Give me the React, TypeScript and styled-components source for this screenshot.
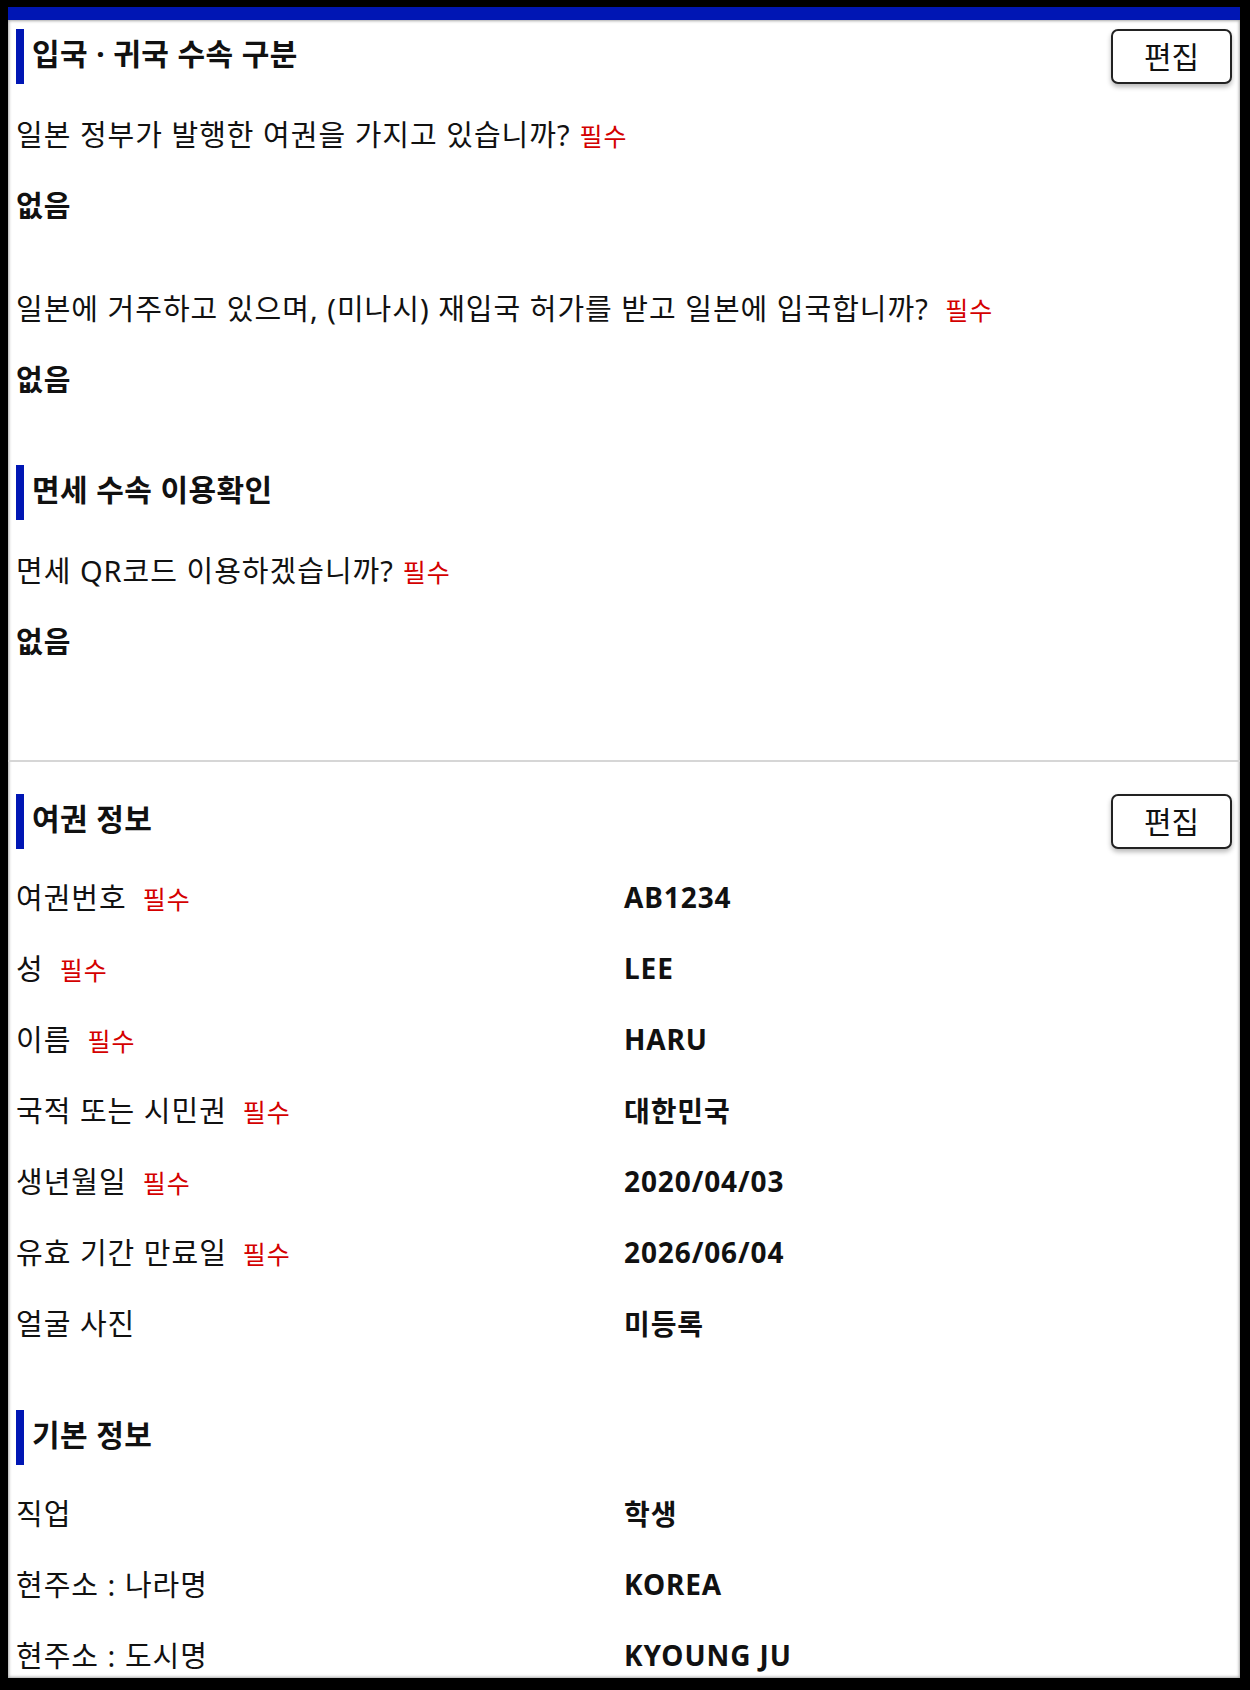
import React from "react";
import styled, { createGlobalStyle } from "styled-components";

const BLUE = "#0016b4";
const RED = "#d40000";

const GlobalStyle = createGlobalStyle`
  html, body {
    margin: 0;
    padding: 0;
    background: #000;
  }
  body {
    font-family: "Noto Sans", "Noto Sans CJK KR", sans-serif;
    color: #111;
  }
  * { box-sizing: border-box; }
`;

const Frame = styled.div`
  margin: 7px 10px 12px 8px;
  height: 1671px;
  overflow: hidden;
  background: #fff;
  border-top: 13px solid ${BLUE};
  box-shadow: inset 0 0 3px 1px rgba(0, 0, 0, 0.35);
`;

const Block = styled.div<{ $divided?: boolean; $pad: string; $gap: number }>`
  display: flex;
  flex-direction: column;
  gap: ${(p) => p.$gap}px;
  padding: ${(p) => p.$pad};
  border-bottom: ${(p) => (p.$divided ? "2px solid #d6d6d6" : "none")};
`;

const Section = styled.section`
  display: flex;
  flex-direction: column;
`;

const SectionHeader = styled.div<{ $space: number }>`
  display: flex;
  align-items: center;
  justify-content: space-between;
  height: 55px;
  margin-bottom: ${(p) => p.$space}px;
`;

const Title = styled.h2`
  margin: 0;
  height: 55px;
  display: flex;
  align-items: center;
  border-left: 8px solid ${BLUE};
  padding: 0 0 10px 8px;
  font-size: 30px;
  font-weight: 700;
  color: #111;
  letter-spacing: 0.4px;
`;

const EditButton = styled.button`
  width: 121px;
  height: 55px;
  border: 2px solid #222;
  border-radius: 7px;
  background: #fff;
  box-shadow: 0 3px 5px rgba(0, 0, 0, 0.28);
  font-family: inherit;
  font-size: 30px;
  color: #111;
  padding: 0 0 3px;
  cursor: pointer;
`;

const QAList = styled.div`
  display: flex;
  flex-direction: column;
  gap: 34px;
`;

const QA = styled.div`
  display: flex;
  flex-direction: column;
`;

const Question = styled.div`
  height: 70px;
  display: flex;
  align-items: center;
  padding-bottom: 2px;
  font-size: 29px;
  letter-spacing: 1px;
  white-space: pre;
`;

const Answer = styled.div`
  height: 70px;
  display: flex;
  align-items: center;
  font-size: 29px;
  font-weight: 700;
  letter-spacing: 1px;
`;

const Line = styled.span`
  display: inline-flex;
  align-items: baseline;
`;

const Required = styled.span<{ $gap: number }>`
  color: ${RED};
  font-size: 25px;
  letter-spacing: 1px;
  margin-left: ${(p) => p.$gap}px;
`;

const FieldGrid = styled.div`
  display: grid;
  grid-template-columns: 1fr 1fr;
  grid-auto-rows: 71px;
  align-items: center;
`;

const Label = styled.div`
  font-size: 29px;
  letter-spacing: 1px;
  display: flex;
  align-items: baseline;
  padding-bottom: 5px;
`;

const Value = styled.div`
  font-size: 28px;
  font-weight: 700;
  letter-spacing: 0.9px;
  padding-bottom: 4px;
`;

type Field = { label: string; value: string; required?: boolean };

const passport: Field[] = [
  { label: "여권번호", value: "AB1234", required: true },
  { label: "성", value: "LEE", required: true },
  { label: "이름", value: "HARU", required: true },
  { label: "국적 또는 시민권", value: "대한민국", required: true },
  { label: "생년월일", value: "2020/04/03", required: true },
  { label: "유효 기간 만료일", value: "2026/06/04", required: true },
  { label: "얼굴 사진", value: "미등록" },
];

const basic: Field[] = [
  { label: "직업", value: "학생" },
  { label: "현주소 : 나라명", value: "KOREA" },
  { label: "현주소 : 도시명", value: "KYOUNG JU" },
];

const Fields = ({ items }: { items: Field[] }) => (
  <FieldGrid>
    {items.map((f) => (
      <React.Fragment key={f.label}>
        <Label>
          {f.label}
          {f.required && <Required $gap={16}>필수</Required>}
        </Label>
        <Value>{f.value}</Value>
      </React.Fragment>
    ))}
  </FieldGrid>
);

const QAItem = ({ q, a, gap = 9 }: { q: string; a: string; gap?: number }) => (
  <QA>
    <Question>
      <Line>
        {q}
        <Required $gap={gap}>필수</Required>
      </Line>
    </Question>
    <Answer>{a}</Answer>
  </QA>
);

export default function App() {
  return (
    <>
      <GlobalStyle />
      <Frame>
        <Block $divided $pad="9px 8px 85px" $gap={52}>
          <Section>
            <SectionHeader $space={15}>
              <Title>입국 · 귀국 수속 구분</Title>
              <EditButton>편집</EditButton>
            </SectionHeader>
            <QAList>
              <QAItem q="일본 정부가 발행한 여권을 가지고 있습니까?" a="없음" />
              <QAItem
                q="일본에 거주하고 있으며, (미나시) 재입국 허가를 받고 일본에 입국합니까? "
                a="없음"
                gap={8}
              />
            </QAList>
          </Section>
          <Section>
            <SectionHeader $space={15}>
              <Title>면세 수속 이용확인</Title>
            </SectionHeader>
            <QAList>
              <QAItem q="면세 QR코드 이용하겠습니까?" a="없음" />
            </QAList>
          </Section>
        </Block>
        <Block $pad="32px 8px 0" $gap={50}>
          <Section>
            <SectionHeader $space={14}>
              <Title>여권 정보</Title>
              <EditButton>편집</EditButton>
            </SectionHeader>
            <Fields items={passport} />
          </Section>
          <Section>
            <SectionHeader $space={14}>
              <Title>기본 정보</Title>
            </SectionHeader>
            <Fields items={basic} />
          </Section>
        </Block>
      </Frame>
    </>
  );
}
